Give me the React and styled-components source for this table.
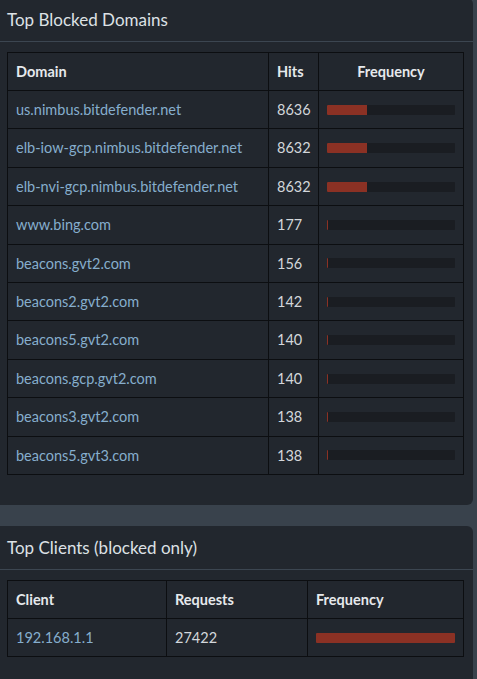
import React from "react";
import styled, { createGlobalStyle } from "styled-components";

const GlobalStyle = createGlobalStyle`
  html, body {
    margin: 0;
    padding: 0;
    background: #39424c;
  }
  body {
    font-family: Lato, "Open Sans", sans-serif;
    color: #d3d7db;
  }
`;

const Page = styled.div`
  display: flex;
  flex-direction: column;
  gap: 21px;
  padding-right: 4px;
  margin-top: -2px;
`;

const Card = styled.div`
  background: #22272e;
  border-radius: 0 6px 6px 0;
`;

const CardHeader = styled.div`
  padding: 10px 7px 9px;
  border-bottom: 1px solid #3c4651;
  font-size: 17px;
  line-height: 24px;
  color: #dde1e5;
`;

const CardBody = styled.div`
  padding: 10px 10px 30px 7px;
`;

const Table = styled.table`
  width: 456px;
  border-collapse: collapse;
  table-layout: fixed;
  border: 1px solid #0c0e11;
  font-size: 14.5px;
`;

const Th = styled.th`
  border: 1px solid #0c0e11;
  padding: 8px;
  line-height: 21px;
  font-weight: 700;
  color: #e6e9ec;
  text-align: ${(p) => (p.$center ? "center" : "left")};
`;

const Td = styled.td`
  border: 1px solid #0c0e11;
  padding: 8px;
  line-height: 21.4px;
  color: #d3d7db;
  white-space: nowrap;
  overflow: hidden;
`;

const Link = styled.a`
  color: #86aecd;
  text-decoration: none;
`;

const Track = styled.div`
  height: 10px;
  background: #1a1d22;
  border-radius: 1px;
  overflow: hidden;
`;

const Fill = styled.div`
  height: 100%;
  background: #8b3124;
`;

const total = 27422;

const domains = [
  ["us.nimbus.bitdefender.net", 8636],
  ["elb-iow-gcp.nimbus.bitdefender.net", 8632],
  ["elb-nvi-gcp.nimbus.bitdefender.net", 8632],
  ["www.bing.com", 177],
  ["beacons.gvt2.com", 156],
  ["beacons2.gvt2.com", 142],
  ["beacons5.gvt2.com", 140],
  ["beacons.gcp.gvt2.com", 140],
  ["beacons3.gvt2.com", 138],
  ["beacons5.gvt3.com", 138],
];

const Bar = ({ value }) => (
  <Track>
    <Fill style={{ width: `${(value / total) * 100}%` }} />
  </Track>
);

export default function App() {
  return (
    <>
      <GlobalStyle />
      <Page>
        <Card>
          <CardHeader>Top Blocked Domains</CardHeader>
          <CardBody>
            <Table>
              <colgroup>
                <col style={{ width: 261 }} />
                <col style={{ width: 50 }} />
                <col style={{ width: 145 }} />
              </colgroup>
              <thead>
                <tr>
                  <Th>Domain</Th>
                  <Th>Hits</Th>
                  <Th $center>Frequency</Th>
                </tr>
              </thead>
              <tbody>
                {domains.map(([d, n]) => (
                  <tr key={d}>
                    <Td>
                      <Link href="#">{d}</Link>
                    </Td>
                    <Td>{n}</Td>
                    <Td>
                      <Bar value={n} />
                    </Td>
                  </tr>
                ))}
              </tbody>
            </Table>
          </CardBody>
        </Card>
        <Card>
          <CardHeader>Top Clients (blocked only)</CardHeader>
          <CardBody>
            <Table>
              <colgroup>
                <col style={{ width: 159 }} />
                <col style={{ width: 141 }} />
                <col style={{ width: 156 }} />
              </colgroup>
              <thead>
                <tr>
                  <Th>Client</Th>
                  <Th>Requests</Th>
                  <Th>Frequency</Th>
                </tr>
              </thead>
              <tbody>
                <tr>
                  <Td>
                    <Link href="#">192.168.1.1</Link>
                  </Td>
                  <Td>27422</Td>
                  <Td>
                    <Bar value={total} />
                  </Td>
                </tr>
              </tbody>
            </Table>
          </CardBody>
        </Card>
      </Page>
    </>
  );
}
